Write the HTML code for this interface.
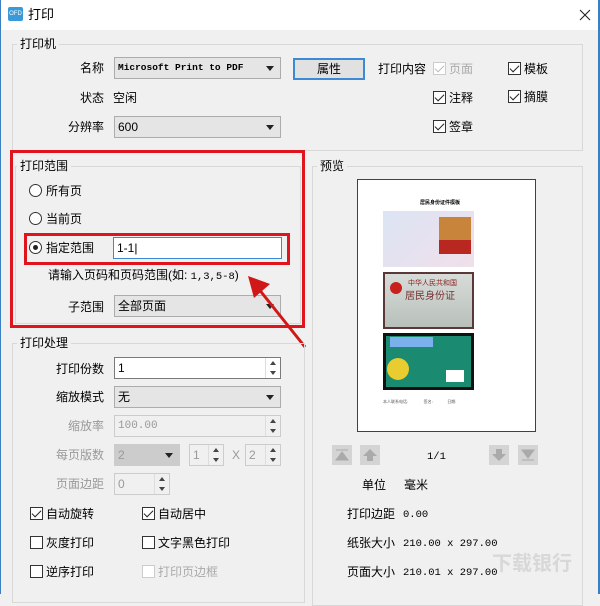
<!DOCTYPE html>
<html><head><meta charset="utf-8"><style>
*{box-sizing:border-box;margin:0;padding:0}
body{width:600px;height:594px;background:#f0f0f0;font-family:"Liberation Sans","Noto Sans CJK SC",sans-serif;font-size:12px;color:#000;position:relative;overflow:hidden}
.a{position:absolute;white-space:nowrap;line-height:14px}
.grp{position:absolute;border:1px solid #d8d8d8}
.lbl{position:absolute;background:#f0f0f0;padding:0 3px;font-size:12px;line-height:14px}
.sel{position:absolute;background:#e5e5e5;border:1px solid #acacac;height:22px;line-height:20px;padding-left:3px}
.sel:after{content:"";position:absolute;right:6px;top:8px;border:4px solid transparent;border-top:5px solid #222}
.inp{position:absolute;background:#fff;border:1px solid #7a7a7a;height:22px;line-height:20px;padding-left:3px}
.dis{background:#f0f0f0;border-color:#ccc;color:#999}
.spin{position:absolute;right:0;top:0;width:15px;height:100%;border-left:1px solid #ddd}
.spin:before{content:"";position:absolute;left:4px;top:3px;border:3px solid transparent;border-bottom:4px solid #444;border-top:0}
.spin:after{content:"";position:absolute;left:4px;bottom:3px;border:3px solid transparent;border-top:4px solid #444;border-bottom:0}
.cb{position:absolute;width:13px;height:13px;border:1px solid #333;background:#fff}
.cb.k:after{content:"";position:absolute;left:3px;top:0px;width:4px;height:8px;border:solid #222;border-width:0 1.5px 1.5px 0;transform:rotate(45deg)}
.cb.g{border-color:#ccc}.cb.g:after{border-color:#bbb}
.rd{position:absolute;width:13px;height:13px;border:1px solid #333;border-radius:50%;background:#fff}
.r{text-align:right}
.m{font-family:"Liberation Mono",monospace;font-size:10.5px}
.mv{padding-top:2px}
</style></head><body>
<div style="position:absolute;left:0;top:0;width:600px;height:30px;background:#fff"></div>
<div style="position:absolute;left:0;top:0;width:1px;height:594px;background:#3a7fc0"></div>
<div style="position:absolute;right:0;top:0;width:2px;height:594px;background:#3a7fc0"></div>
<div style="position:absolute;left:8px;top:7px;width:15px;height:14px;background:#3a9ad9;border-radius:2px;color:#fff;font-size:6px;line-height:14px;text-align:center">OFD</div>
<div class="a" style="left:28px;top:8px;font-size:13px">打印</div>
<svg style="position:absolute;left:579px;top:9px" width="12" height="12"><path d="M1 1L11 11M11 1L1 11" stroke="#222" stroke-width="1.1"/></svg>

<div class="grp" style="left:12px;top:44px;width:571px;height:107px"></div>
<div class="lbl" style="left:17px;top:37px">打印机</div>
<div class="a r" style="left:50px;top:61px;width:54px">名称</div>
<div class="sel m" style="left:114px;top:57px;width:167px;font-size:9.5px;font-weight:bold">Microsoft Print to PDF</div>
<div style="position:absolute;left:293px;top:58px;width:72px;height:22px;border:2px solid #3c8ad6;background:#e1e1e1;text-align:center;line-height:18px">属性</div>
<div class="a" style="left:378px;top:62px">打印内容</div>
<div class="cb k g" style="left:433px;top:62px"></div><div class="a" style="left:449px;top:62px;color:#aaa">页面</div>
<div class="cb k" style="left:508px;top:62px"></div><div class="a" style="left:524px;top:62px">模板</div>
<div class="cb k" style="left:433px;top:91px"></div><div class="a" style="left:449px;top:91px">注释</div>
<div class="cb k" style="left:508px;top:90px"></div><div class="a" style="left:524px;top:90px">摘膜</div>
<div class="cb k" style="left:433px;top:120px"></div><div class="a" style="left:449px;top:120px">签章</div>
<div class="a r" style="left:50px;top:91px;width:54px">状态</div>
<div class="a" style="left:113px;top:91px">空闲</div>
<div class="a r" style="left:50px;top:120px;width:54px">分辨率</div>
<div class="sel" style="left:114px;top:116px;width:167px">600</div>

<div class="grp" style="left:15px;top:166px;width:286px;height:158px"></div>
<div class="lbl" style="left:17px;top:159px">打印范围</div>
<div style="position:absolute;left:10px;top:150px;width:295px;height:178px;border:3px solid #e0141c"></div>
<div class="rd" style="left:29px;top:184px"></div><div class="a" style="left:46px;top:184px">所有页</div>
<div class="rd" style="left:29px;top:212px"></div><div class="a" style="left:46px;top:212px">当前页</div>
<div class="rd" style="left:29px;top:241px"></div><div style="position:absolute;left:33px;top:245px;width:5px;height:5px;border-radius:50%;background:#222"></div>
<div class="a" style="left:46px;top:241px">指定范围</div>
<div style="position:absolute;left:24px;top:233px;width:266px;height:32px;border:3px solid #e0141c"></div>
<div class="inp" style="left:113px;top:237px;width:169px;border-color:#3c8ad6">1-1|</div>
<div class="a" style="left:48px;top:268px">请输入页码和页码范围(如: <span class="m">1,3,5-8</span>)</div>
<div class="a r" style="left:50px;top:300px;width:54px">子范围</div>
<div class="sel" style="left:114px;top:295px;width:167px">全部页面</div>
<svg style="position:absolute;left:240px;top:270px" width="70" height="80"><line x1="65" y1="77" x2="18" y2="18" stroke="#d01818" stroke-width="3"/><polygon points="8,6 30,14 14,28" fill="#d01818"/></svg>

<div class="grp" style="left:12px;top:343px;width:293px;height:260px"></div>
<div class="lbl" style="left:17px;top:336px">打印处理</div>
<div class="a r" style="left:40px;top:362px;width:64px">打印份数</div>
<div class="inp" style="left:114px;top:357px;width:167px">1<div class="spin"></div></div>
<div class="a r" style="left:40px;top:390px;width:64px">缩放模式</div>
<div class="sel" style="left:114px;top:386px;width:167px">无</div>
<div class="a r" style="left:40px;top:419px;width:64px;color:#999">缩放率</div>
<div class="inp dis m" style="left:114px;top:415px;width:167px;font-size:11px">100.00<div class="spin"></div></div>
<div class="a r" style="left:40px;top:448px;width:64px;color:#999">每页版数</div>
<div class="sel dis" style="left:114px;top:444px;width:66px;background:#ccc">2</div>
<div class="inp dis" style="left:189px;top:444px;width:35px">1<div class="spin"></div></div>
<div class="a" style="left:232px;top:448px;color:#999">X</div>
<div class="inp dis" style="left:245px;top:444px;width:36px">2<div class="spin"></div></div>
<div class="a r" style="left:40px;top:477px;width:64px;color:#999">页面边距</div>
<div class="inp dis" style="left:114px;top:473px;width:56px">0<div class="spin"></div></div>
<div class="cb k" style="left:30px;top:507px"></div><div class="a" style="left:46px;top:507px">自动旋转</div>
<div class="cb k" style="left:142px;top:507px"></div><div class="a" style="left:158px;top:507px">自动居中</div>
<div class="cb" style="left:30px;top:536px"></div><div class="a" style="left:46px;top:536px">灰度打印</div>
<div class="cb" style="left:142px;top:536px"></div><div class="a" style="left:158px;top:536px">文字黑色打印</div>
<div class="cb" style="left:30px;top:565px"></div><div class="a" style="left:46px;top:565px">逆序打印</div>
<div class="cb g" style="left:142px;top:565px"></div><div class="a" style="left:158px;top:565px;color:#aaa">打印页边框</div>

<div class="grp" style="left:312px;top:166px;width:271px;height:440px"></div>
<div class="lbl" style="left:317px;top:159px">预览</div>
<div style="position:absolute;left:357px;top:179px;width:179px;height:253px;background:#fff;border:1px solid #3a3a78"></div>
<div class="a" style="left:420px;top:200px;font-size:5px;font-weight:bold;line-height:6px">居民身份证件模板</div>
<div style="position:absolute;left:383px;top:211px;width:91px;height:56px;background:linear-gradient(135deg,#dce4f4,#f0e0ea)"></div>
<div style="position:absolute;left:439px;top:217px;width:32px;height:37px;background:#c8843a"></div>
<div style="position:absolute;left:439px;top:240px;width:32px;height:14px;background:#b82820"></div>
<div style="position:absolute;left:383px;top:272px;width:91px;height:57px;background:#5a3838;padding:2px"><div style="width:100%;height:100%;background:linear-gradient(#d8dcd8,#b8c0bc)"></div></div>
<div style="position:absolute;left:390px;top:282px;width:12px;height:12px;border-radius:50%;background:#c8201c"></div>
<div class="a" style="left:408px;top:280px;font-size:7px;line-height:8px;color:#822">中华人民共和国</div>
<div class="a" style="left:405px;top:291px;font-size:10px;line-height:11px;color:#733">居民身份证</div>
<div style="position:absolute;left:383px;top:333px;width:91px;height:57px;background:#111;padding:3px"><div style="width:100%;height:100%;background:#1a8a70"></div></div>
<div style="position:absolute;left:390px;top:337px;width:43px;height:10px;background:#7ab0ec"></div>
<div style="position:absolute;left:387px;top:358px;width:22px;height:22px;border-radius:50%;background:#e8cc30"></div>
<div style="position:absolute;left:446px;top:370px;width:18px;height:12px;background:#fff"></div>
<div class="a" style="left:383px;top:399px;font-size:4px;line-height:5px;color:#555">本人联系电话:&nbsp;&nbsp;&nbsp;&nbsp;&nbsp;&nbsp;&nbsp;&nbsp;&nbsp;&nbsp;&nbsp;&nbsp;&nbsp;&nbsp;签名:&nbsp;&nbsp;&nbsp;&nbsp;&nbsp;&nbsp;&nbsp;&nbsp;&nbsp;&nbsp;&nbsp;&nbsp;&nbsp;日期:</div>
<svg style="position:absolute;left:332px;top:445px" width="210" height="20">
<rect x="0" y="0" width="20" height="20" fill="#d4d4d4"/><path d="M4 5H16M10 7L4 15H16Z" stroke="#aaa" fill="#aaa"/>
<rect x="28" y="0" width="20" height="20" fill="#d4d4d4"/><path d="M38 4L31 11H35V16H41V11H45Z" fill="#aaa"/>
<rect x="157" y="0" width="20" height="20" fill="#d4d4d4"/><path d="M167 16L160 9H164V4H170V9H174Z" fill="#aaa"/>
<rect x="186" y="0" width="20" height="20" fill="#d4d4d4"/><path d="M190 15H202M196 13L190 5H202Z" stroke="#aaa" fill="#aaa"/>
</svg>
<div class="a m mv" style="left:427px;top:448px">1/1</div>
<div class="a" style="left:362px;top:478px">单位</div><div class="a" style="left:404px;top:478px">毫米</div>
<div class="a r" style="left:330px;top:507px;width:65px">打印边距</div><div class="a m mv" style="left:403px;top:506px">0.00</div>
<div class="a r" style="left:330px;top:536px;width:65px">纸张大小</div><div class="a m mv" style="left:403px;top:535px">210.00 x 297.00</div>
<div class="a r" style="left:330px;top:565px;width:65px">页面大小</div><div class="a m mv" style="left:403px;top:564px">210.01 x 297.00</div>
<div class="a" style="left:492px;top:553px;font-size:20px;line-height:22px;color:rgba(180,180,180,.4);font-weight:bold">下载银行</div>
</body></html>
